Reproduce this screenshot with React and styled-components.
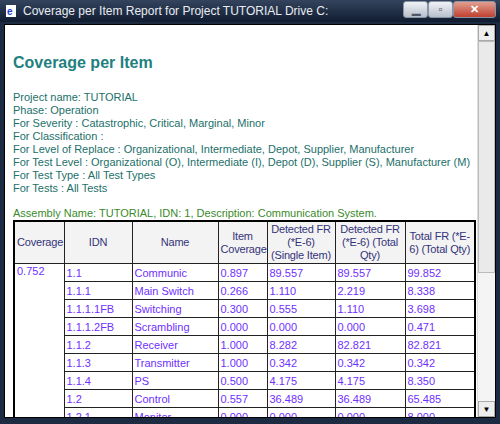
import React from "react";
import styled, { createGlobalStyle } from "styled-components";

const G = createGlobalStyle`
  html,body{margin:0;padding:0;overflow:hidden;}
  body{font-family:"Liberation Sans",Arial,sans-serif;}
`;
const Win = styled.div`
  width:500px;height:424px;display:flex;flex-direction:column;background:#1c2a42;box-sizing:border-box;
`;
const TitleBar = styled.div`
  height:22px;display:flex;align-items:center;padding:0 4px;gap:5px;
  background:linear-gradient(#34445e,#101c30);color:#e8ecf2;font-size:12px;
`;
const TTitle = styled.span`flex:1;white-space:nowrap;`;
const Btn = styled.div`
  width:${p=>p.w}px;height:17px;border:1px solid #8a94a4;border-radius:3px;box-sizing:border-box;
  background:${p=>p.close?"linear-gradient(#e0a090,#c04030)":"linear-gradient(#f0f2f6,#b8c0cc)"};
  display:flex;align-items:center;justify-content:center;color:${p=>p.close?"#fff":"#556"};font-weight:bold;font-size:11px;margin-top:-4px;
`;
const BtnGroup = styled.div`display:flex;`;
const Body = styled.div`
  flex:1;display:flex;margin:2px 4px 6px 4px;background:#fff;border:1px solid #000;overflow:hidden;
`;
const Content = styled.div`flex:1;padding:29px 0 0 8px;overflow:hidden;`;
const H1 = styled.div`color:#1e8080;font-weight:bold;font-size:16px;margin-bottom:19px;`;
const Info = styled.div`color:#22706a;font-size:11px;line-height:13px;`;
const Assembly = styled.div`color:#3a8a2a;font-size:11px;line-height:13px;margin-top:12px;`;
const Table = styled.table`
  border-collapse:collapse;font-size:11px;border:2px solid #000;width:461px;table-layout:fixed;
  td,th{border:1px solid #222;padding:1px 2px;}
`;
const Th = styled.th`background:#f3f3f3;color:#33337a;font-weight:normal;height:38px;text-align:center;line-height:13px;letter-spacing:-0.2px;`;
const Td = styled.td`color:#7030ff;height:15px;text-align:left;vertical-align:${p=>p.top?"top":"middle"};white-space:nowrap;`;
const Scroll = styled.div`width:17px;display:flex;flex-direction:column;background:#f4f4f4;border-left:1px solid #ddd;`;
const Arrow = styled.div`height:16px;background:#eee;border:1px solid #aaa;box-sizing:border-box;font-size:8px;display:flex;align-items:center;justify-content:center;`;
const Thumb = styled.div`height:232px;background:#eaeaea;border:1px solid #bbb;box-sizing:border-box;`;
const Track = styled.div`flex:1;`;

const rows=[
["1.1","Communic","0.897","89.557","89.557","99.852"],
["1.1.1","Main Switch","0.266","1.110","2.219","8.338"],
["1.1.1.1FB","Switching","0.300","0.555","1.110","3.698"],
["1.1.1.2FB","Scrambling","0.000","0.000","0.000","0.471"],
["1.1.2","Receiver","1.000","8.282","82.821","82.821"],
["1.1.3","Transmitter","1.000","0.342","0.342","0.342"],
["1.1.4","PS","0.500","4.175","4.175","8.350"],
["1.2","Control","0.557","36.489","36.489","65.485"],
["1.2.1","Monitor","0.000","0.000","0.000","8.000"],
];

export default function App(){
  return <><G/><Win>
    <TitleBar>
      <svg width="14" height="14"><rect x="2" y="1" width="10" height="12" fill="#fff"/><text x="3" y="11" fontSize="10" fill="#2040d0" fontWeight="bold">e</text></svg>
      <TTitle>Coverage per Item Report for Project TUTORIAL Drive C:</TTitle>
      <BtnGroup><Btn w={25}>▁</Btn><Btn w={25}>▫</Btn><Btn w={43} close>✕</Btn></BtnGroup>
    </TitleBar>
    <Body>
      <Content>
        <H1>Coverage per Item</H1>
        <Info>
          <div>Project name: TUTORIAL</div>
          <div>Phase: Operation</div>
          <div>For Severity : Catastrophic, Critical, Marginal, Minor</div>
          <div>For Classification :</div>
          <div>For Level of Replace : Organizational, Intermediate, Depot, Supplier, Manufacturer</div>
          <div>For Test Level : Organizational (O), Intermediate (I), Depot (D), Supplier (S), Manufacturer (M)</div>
          <div>For Test Type : All Test Types</div>
          <div>For Tests : All Tests</div>
        </Info>
        <Assembly>Assembly Name: TUTORIAL, IDN: 1, Description: Communication System.</Assembly>
        <Table>
          <colgroup><col style={{width:50}}/><col style={{width:68}}/><col style={{width:86}}/><col style={{width:49}}/><col style={{width:68}}/><col style={{width:70}}/><col style={{width:70}}/></colgroup>
          <thead><tr><Th>Coverage</Th><Th>IDN</Th><Th>Name</Th><Th>Item Coverage</Th><Th>Detected FR (*E-6) (Single Item)</Th><Th>Detected FR (*E-6) (Total Qty)</Th><Th>Total FR (*E-6) (Total Qty)</Th></tr></thead>
          <tbody>{rows.map((r,i)=><tr key={i}>{i===0&&<Td top rowSpan={rows.length}>0.752</Td>}{r.map((c,j)=><Td key={j}>{c}</Td>)}</tr>)}</tbody>
        </Table>
      </Content>
      <Scroll><Arrow>▲</Arrow><Thumb/><Track/><Arrow>▼</Arrow></Scroll>
    </Body>
  </Win></>;
}
